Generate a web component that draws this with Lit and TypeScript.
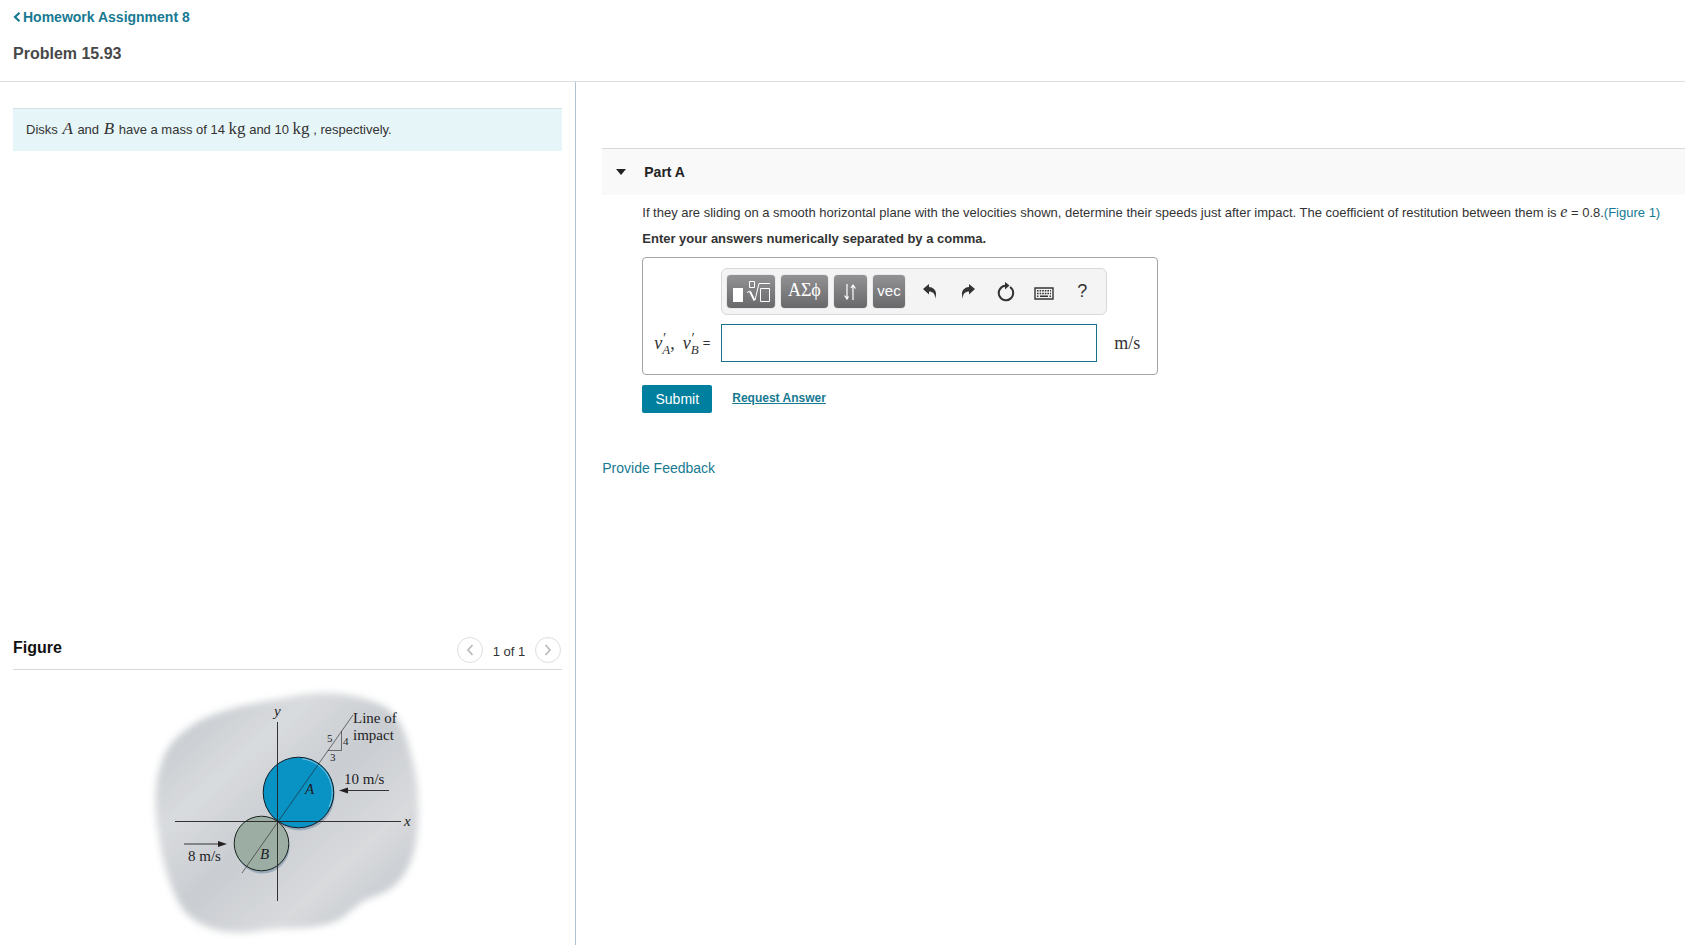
import { LitElement, html, css, svg } from "lit";
import { customElement, state } from "lit/decorators.js";

const sans = css`"Liberation Sans", Arial, sans-serif`;
const serif = css`"Liberation Serif", "Times New Roman", serif`;

@customElement("impact-diagram")
class ImpactDiagram extends LitElement {
  static styles = css`
    :host { display: block; }
    svg { display: block; width: 300px; height: 265px; }
    text { font-family: ${serif}; font-size: 15px; fill: #1d1d1f; }
    .small { font-size: 11px; }
    .it { font-style: italic; }
    .line { stroke: #231f20; stroke-width: 0.9; fill: none; }
    .thin { stroke: #231f20; stroke-width: 0.6; fill: none; }
    .arrow { fill: #231f20; }
  `;

  render() {
    return html`<svg viewBox="0 0 300 265" role="img" aria-label="Disks A and B at impact">${svg`
      <defs>
        <linearGradient id="plane" x1="0" y1="0" x2="1" y2="1">
          <stop offset="0" stop-color="#bcc3c8" />
          <stop offset="0.3" stop-color="#d9dbde" />
          <stop offset="0.5" stop-color="#c9cdd1" />
          <stop offset="0.72" stop-color="#d9dadd" />
          <stop offset="1" stop-color="#b9c1c7" />
        </linearGradient>
        <filter id="soft" x="-10%" y="-10%" width="120%" height="120%">
          <feGaussianBlur stdDeviation="3.500" />
        </filter>
      </defs>
      <path filter="url(#soft)" fill="url(#plane)" d="M57 42 C92 24 125 22 150 17 C180 9 222 13 247 28 C264 42 268 62 274 86 C280 112 280 145 274 172 C264 205 248 212 228 219 C210 228 207 240 185 245 C160 251 138 246 112 252 C82 255 56 247 42 228 C29 208 22 180 18 152 C14 125 14 98 24 76 C31 60 42 52 57 42Z" />
      <circle cx="122.500" cy="166.500" r="27" fill="#9aa9b8" />
      <circle cx="159.500" cy="115.500" r="35" fill="#9aa9b8" />
      <circle cx="121.500" cy="163.500" r="27.300" fill="#9caea3" stroke="#17211d" />
      <circle cx="158.500" cy="112.500" r="35.300" fill="#0993c4" stroke="#0d1c26" />
      <path d="M162 78.800 A34 34 0 0 1 189 127" fill="none" stroke="#7cc4e2" />
      <path class="line" d="M137.500 42V221M35 141.500H261M249 110.500H205M44 164H81" />
      <path class="thin" d="M102 193L213 35M188 70.500H201.500V51" />
      <path class="arrow" d="M199 110.500L208 107.500V113.500ZM87 164L78 161V167Z" />
      <text class="it" x="134" y="36">y</text>
      <text class="it" x="264" y="146">x</text>
      <text x="213" y="43">Line of</text>
      <text x="213" y="60">impact</text>
      <text class="small" x="187" y="62">5</text>
      <text class="small" x="203" y="65">4</text>
      <text class="small" x="190" y="81">3</text>
      <text x="204" y="104">10 m/s</text>
      <text x="48" y="181">8 m/s</text>
      <text class="it" x="165" y="114">A</text>
      <text class="it" x="120" y="179">B</text>
    `}</svg>`;
  }
}

@customElement("answer-editor")
class AnswerEditor extends LitElement {
  @state() value = "";

  static styles = css`
    :host { display: block; }
    .box { box-sizing: border-box; width: 516px; max-width: 100%; padding: 10px 15px 12px 11px; border: 1px solid #a5a5a5; border-radius: 4px; display: grid; grid-template-columns: 67px 376px auto; row-gap: 9px; column-gap: 0; align-items: center; }
    .toolbar { grid-column: 2 / 4; justify-self: start; box-sizing: border-box; width: 386px; height: 47px; padding: 0 5px; display: flex; align-items: center; gap: 6px; background: #f4f4f4; border: 1px solid #d8d8d8; border-radius: 6px; }
    button { font-family: ${sans}; padding: 0; border: 0; display: flex; align-items: center; justify-content: center; cursor: pointer; }
    .key { box-sizing: border-box; height: 33px; width: 33px; padding-bottom: 2px; color: #fff; border-radius: 4px; background: linear-gradient(#929295, #69696c); box-shadow: 0 0 1px #777; font-size: 15px; }
    .wide { width: 48px; padding-bottom: 0; }
    .greek { font-family: ${serif}; font-size: 18px; padding-bottom: 2px; }
    .tools { display: flex; }
    .tool { width: 38px; height: 33px; background: none; color: #333; font-size: 18px; }
    svg { display: block; }
    label { font-family: ${serif}; font-size: 18px; color: #333; display: flex; align-items: center; height: 30px; }
    .scripts { display: inline-grid; font-size: 13px; line-height: 12px; padding-top: 3px; }
    .prime { font-size: 14px; line-height: 10px; font-style: italic; }
    .comma { margin-right: 8px; }
    .eq { font-family: ${sans}; font-size: 13px; margin-left: 4px; }
    input { box-sizing: border-box; width: 376px; height: 38px; border: 1px solid #17708c; border-radius: 0; padding: 0 8px; font: 16px ${sans}; outline: 0; background: #fff; }
    .unit { font-family: ${serif}; font-size: 18px; line-height: 20px; color: #333; margin-left: 17px; }
  `;

  render() {
    return html`
      <div class="box">
        <div class="toolbar" role="toolbar" aria-label="Math tools">
          <button class="key wide" aria-label="Templates">
            <svg width="38" height="24" viewBox="0 0 38 24" fill="none" stroke="#fff">
              <path d="M1 8H11V22H1Z" fill="#fff" stroke="none" />
              <path d="M17.500 1.500H22.500V7.500H17.500ZM28.500 8.500H37.500V21.500H28.500Z" />
              <path d="M15 12.500L18 11M23 20L27 3.500H38" />
              <path d="M18 11.500L22.500 20.500" stroke-width="2" />
            </svg>
          </button>
          <button class="key wide greek" aria-label="Greek letters">ΑΣϕ</button>
          <button class="key" aria-label="Sub and superscripts">
            <svg width="14" height="18" viewBox="0 0 14 18" fill="none" stroke="#fff" stroke-width="1.200">
              <path d="M4 2V17M1.500 13.500L4 17L5.500 14.500M10 18V3M8 6L10 3L12.500 6.500" />
            </svg>
          </button>
          <button class="key">vec</button>
          <div class="tools">
            <button class="tool" aria-label="Undo">
              <svg width="14" height="15" viewBox="0 0 14 15"><path fill="#333" d="M0 5L6 0V3C11 3.500 15 7 12 15C12.500 10 10 7.500 6 7.500V10.500Z" /></svg>
            </button>
            <button class="tool" aria-label="Redo">
              <svg width="14" height="15" viewBox="0 0 14 15"><path fill="#333" d="M14 5L8 0V3C3 3.500 -1 7 2 15C1.500 10 4 7.500 8 7.500V10.500Z" /></svg>
            </button>
            <button class="tool" aria-label="Reset">
              <svg width="18" height="20" viewBox="0 0 18 20"><path fill="none" stroke="#333" stroke-width="2" d="M13 5A7.200 7.200 0 1 1 8.500 3.800" /><path fill="#333" d="M8 0L12.500 3.500L8 7.500Z" /></svg>
            </button>
            <button class="tool" aria-label="Keyboard">
              <svg width="20" height="18" viewBox="0 0 20 18" fill="none" stroke="#333"><path stroke-width="1.400" d="M1 5H19V16H1Z" /><path stroke-width="1.400" stroke-dasharray="1.600 1" d="M3 7.800H17M3 10.500H17" /><path stroke-width="1.400" d="M3 13.300H4.500M6 13.300H14M15.500 13.300H17" /></svg>
            </button>
            <button class="tool" aria-label="Help">?</button>
          </div>
        </div>
        <label for="answer">
          <i>v</i><span class="scripts"><span class="prime">′</span><i>A</i></span><span class="comma">,</span>
          <i>v</i><span class="scripts"><span class="prime">′</span><i>B</i></span><span class="eq">=</span>
        </label>
        <input id="answer" type="text" autocomplete="off" .value=${this.value}
          @input=${(e: Event) => (this.value = (e.target as HTMLInputElement).value)} />
        <span class="unit">m/s</span>
      </div>
    `;
  }
}

@customElement("app-root")
class AppRoot extends LitElement {
  @state() open = true;

  static styles = css`
    :host { display: flex; flex-direction: column; min-height: 100vh; box-sizing: border-box; background: #fff; color: #333; font: 13px/20px ${sans}; }
    a { color: #177a92; text-decoration: none; }
    h1, h2, p { margin: 0; }
    header { padding: 7px 13px 17px; border-bottom: 1px solid #dcdfe0; }
    .back { display: inline-flex; align-items: center; gap: 2px; font-size: 14px; font-weight: bold; }
    h1 { font-size: 16px; line-height: 20px; margin-top: 16px; color: #484848; }
    main { flex: 1; display: grid; grid-template-columns: minmax(0, 342fr) minmax(0, 658fr); }
    .left { display: flex; flex-direction: column; justify-content: space-between; border-right: 1px solid #b0c2d2; padding: 26px 13px 0; }
    .intro { padding: 10px 13px 11px; border-top: 1px solid #d3e3e4; background: #e6f5f7; }
    .math { font-family: ${serif}; font-size: 17px; line-height: 20px; }
    .symbol { margin: 0 1px; }
    .value { font-size: 16px; }
    .bar { display: flex; justify-content: space-between; align-items: center; padding-bottom: 6px; border-bottom: 1px solid #d9d9d9; }
    h2 { font-size: 16px; line-height: 24px; color: #111; padding-bottom: 3px; }
    .pager { display: flex; align-items: center; gap: 10px; padding: 2px 1px 0 0; }
    .pager span { padding-top: 4px; }
    .pager button { box-sizing: border-box; width: 26px; height: 26px; padding: 0; border: 1px solid #dedede; border-radius: 50%; background: #fff; display: flex; align-items: center; justify-content: center; }
    .drawing { margin: 10px 0 0 127px; }
    .right { padding: 66px 0 0 26px; }
    .part { box-sizing: border-box; width: 100%; height: 47px; padding: 0 14px 1px; display: flex; align-items: center; gap: 18px; border: 0; border-top: 1px solid #d9d9d9; background: #f9f9f9; font: bold 14px ${sans}; color: #222; text-align: left; cursor: pointer; }
    .body { padding: 7px 16px 0 40px; }
    .ask { margin-top: 6px; font-weight: bold; }
    .editor { margin-top: 8px; }
    .actions { display: flex; align-items: center; gap: 20px; margin-top: 10px; }
    .submit { width: 70px; height: 28px; padding: 0; border: 0; border-radius: 2px; background: #007f9f; color: #fff; font: 14px ${sans}; cursor: pointer; }
    .request { font-size: 12px; font-weight: bold; text-decoration: underline; padding-bottom: 2px; }
    .feedback { display: inline-block; margin-top: 45px; font-size: 14px; }
  `;

  render() {
    return html`
      <header>
        <a class="back" href="#assignment"><svg width="8" height="10" viewBox="0 0 8 10"><path d="M6.500 0.800L2 5L6.500 9.200" fill="none" stroke="#177a92" stroke-width="2.200" /></svg>Homework Assignment 8</a>
        <h1>Problem 15.93</h1>
      </header>
      <main>
        <section class="left">
          <p class="intro">Disks <i class="math symbol">A</i> and <i class="math symbol">B</i> have a mass of 14 <span class="math">kg</span> and 10 <span class="math">kg</span> , respectively.</p>
          <div>
            <div class="bar">
              <h2>Figure</h2>
              <div class="pager">
                <button aria-label="Previous figure" disabled><svg width="8" height="12" viewBox="0 0 8 12"><path d="M6.500 1L2 6L6.500 11" fill="none" stroke="#bcbcbc" stroke-width="1.800" /></svg></button>
                <span>1 of 1</span>
                <button aria-label="Next figure" disabled><svg width="8" height="12" viewBox="0 0 8 12"><path d="M1.500 1L6 6L1.500 11" fill="none" stroke="#bcbcbc" stroke-width="1.800" /></svg></button>
              </div>
            </div>
            <impact-diagram class="drawing"></impact-diagram>
          </div>
        </section>
        <section class="right">
          <button class="part" aria-expanded=${this.open} @click=${() => (this.open = !this.open)}>
            <svg width="10" height="6" viewBox="0 0 10 6"><path d="M0 0H10L5 6Z" fill="#222" /></svg>Part A
          </button>
          ${this.open ? html`<div class="body">
            <p>If they are sliding on a smooth horizontal plane with the velocities shown, determine their speeds just after impact. The coefficient of restitution between them is <i class="math value">e</i> = 0.8.<a href="#figure">(Figure 1)</a></p>
            <p class="ask">Enter your answers numerically separated by a comma.</p>
            <answer-editor class="editor"></answer-editor>
            <div class="actions">
              <button class="submit">Submit</button>
              <a class="request" href="#answer">Request Answer</a>
            </div>
          </div>` : ""}
          <a class="feedback" href="#feedback">Provide Feedback</a>
        </section>
      </main>
    `;
  }
}
